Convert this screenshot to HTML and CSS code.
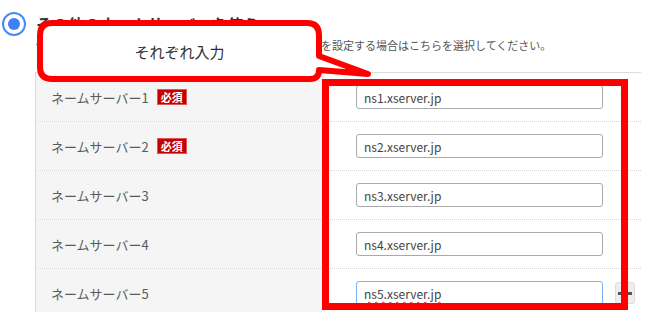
FILE: index.html
```html
<!DOCTYPE html>
<html lang="ja">
<head>
  <meta charset="UTF-8">
  <title>ネームサーバー設定</title>
  <link rel="stylesheet" href="styles.css">
</head>
<body>

  <div class="page">
    <div class="option">
      <div class="option-head">
        <span class="radio"></span>
        <span class="option-title">その他のネームサーバーを使う</span>
      </div>
      <p class="option-desc">他社サービスなど、お客様自身で用意したネームサーバーを設定する場合はこちらを選択してください。</p>
    </div>

    <div class="ns-list">
      <div class="ns-row">
        <div class="ns-label">ネームサーバー1 <span class="badge">必須</span></div>
        <div class="ns-field"><input class="ns-input" type="text" value="ns1.xserver.jp"></div>
      </div>
      <div class="ns-row">
        <div class="ns-label">ネームサーバー2 <span class="badge">必須</span></div>
        <div class="ns-field"><input class="ns-input" type="text" value="ns2.xserver.jp"></div>
      </div>
      <div class="ns-row">
        <div class="ns-label">ネームサーバー3</div>
        <div class="ns-field"><input class="ns-input" type="text" value="ns3.xserver.jp"></div>
      </div>
      <div class="ns-row">
        <div class="ns-label">ネームサーバー4</div>
        <div class="ns-field"><input class="ns-input" type="text" value="ns4.xserver.jp"></div>
      </div>
      <div class="ns-row">
        <div class="ns-label">ネームサーバー5</div>
        <div class="ns-field">
          <div class="ns-input ns-input-focus"><span class="typo">ns5.xserver.jp</span></div>
          <button class="ns-btn" title="削除"></button>
        </div>
      </div>
    </div>

    <!-- 注釈の吹き出しと赤枠 -->
    <div class="callout">
      <svg class="callout-shape" width="380" height="90" viewBox="0 0 380 90">
        <path d="M52 23 H307 Q319 23 319 35 V56 L368 74 L319 70 Q319 79 310 79 H52 Q40 79 40 67 V35 Q40 23 52 23 Z"
              fill="#fff" stroke="#ff0000" stroke-width="6" stroke-linejoin="round"/>
      </svg>
      <div class="callout-text">それぞれ入力</div>
    </div>
    <div class="highlight"></div>
  </div>

</body>
</html>
```

FILE: styles.css
```css
body {
  margin: 0;
  background: #fff;
  font-family: "Noto Sans CJK JP", "Noto Sans", sans-serif;
  color: #555;
}

.page {
  position: relative;
  width: 665px;
  height: 312px;
  overflow: hidden;
}

.option-head {
  display: flex;
  align-items: center;
  gap: 10px;
  height: 24px;
  margin-top: 12px;
  padding-left: 2px;
}

.radio {
  width: 24px;
  height: 24px;
  box-sizing: border-box;
  border: 2px solid #4a8af4;
  border-radius: 50%;
  display: flex;
  align-items: center;
  justify-content: center;
}

.radio::after {
  content: "";
  width: 12px;
  height: 12px;
  border-radius: 50%;
  background: #3d80f0;
}

.option-title {
  font-size: 16px;
  font-weight: bold;
  line-height: 24px;
  color: #333;
}

.option-desc {
  margin: 1px 0 19px 36px;
  font-size: 11px;
  line-height: 16px;
  color: #555;
  white-space: nowrap;
}

.ns-list {
  margin-left: 35px;
  width: 605px;
  border-top: 1px solid #ddd;
  border-left: 1px solid #ddd;
}

.ns-row {
  display: flex;
  height: 49px;
  box-sizing: border-box;
  border-bottom: 1px dotted #d6d6d6;
}

.ns-label {
  width: 289px;
  padding-left: 15px;
  box-sizing: border-box;
  background: #f5f5f5;
  display: flex;
  align-items: center;
  gap: 8px;
  font-size: 13px;
  color: #5a5a5a;
}

.badge {
  background: #c40000;
  border: 1px solid #e05555;
  color: #fff;
  font-size: 11px;
  font-weight: bold;
  line-height: 14px;
  padding: 0 3px;
}

.ns-field {
  display: flex;
  align-items: center;
  padding-left: 31px;
}

.ns-input {
  width: 247px;
  height: 24px;
  box-sizing: border-box;
  border: 1px solid #aaa;
  border-radius: 3px;
  padding: 0 7px;
  font-family: "Noto Sans CJK JP", "Noto Sans", sans-serif;
  font-size: 12px;
  color: #444;
  background: #fff;
}

.ns-input-focus {
  display: flex;
  align-items: center;
  border-color: #7db0f7;
}

.typo {
  text-decoration: underline wavy #e03030;
  text-decoration-thickness: 1px;
  text-underline-offset: 2px;
}

.ns-btn {
  margin-left: 12px;
  width: 20px;
  height: 22px;
  padding: 0;
  border: 1px solid #ddd;
  border-radius: 3px;
  background: #eee;
  display: flex;
  align-items: center;
  justify-content: center;
}

.ns-btn::before {
  content: "";
  width: 14px;
  height: 3px;
  background: #555;
}

.callout {
  position: absolute;
  left: 0;
  top: 0;
  width: 380px;
  height: 90px;
}

.callout-shape {
  display: block;
}

.callout-text {
  position: absolute;
  left: 40px;
  top: 23px;
  width: 279px;
  height: 56px;
  display: flex;
  align-items: center;
  justify-content: center;
  font-size: 15px;
  color: #333;
}

.highlight {
  position: absolute;
  left: 322px;
  top: 79px;
  width: 306px;
  height: 231px;
  box-sizing: border-box;
  border: 7px solid #ff0000;
}
```
